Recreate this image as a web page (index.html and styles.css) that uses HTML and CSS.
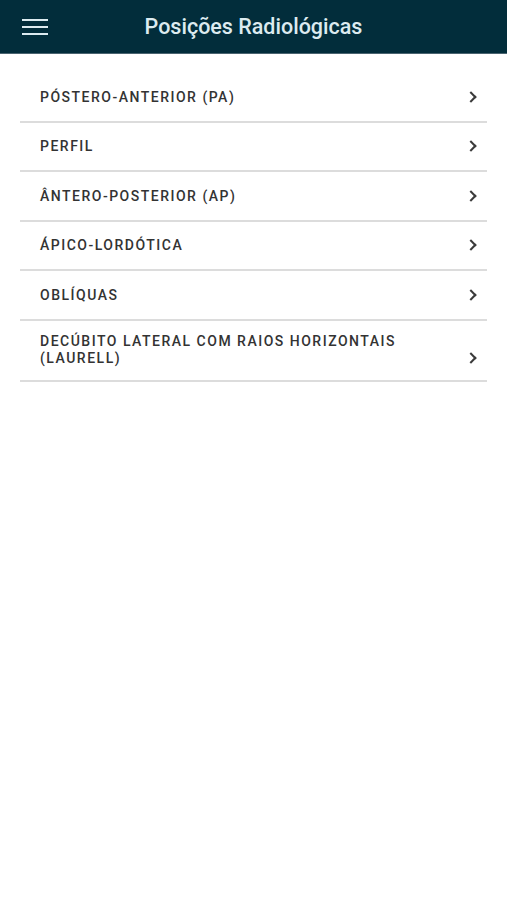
FILE: index.html
```html
<!DOCTYPE html>
<html lang="pt">
<head>
  <meta charset="UTF-8">
  <meta name="viewport" content="width=device-width, initial-scale=1.0">
  <title>Posições Radiológicas</title>
  <link rel="stylesheet" href="styles.css">
</head>
<body>
  <div class="toolbar">
    <button class="menu-btn" aria-label="Menu">
      <svg width="26" height="16" viewBox="0 0 26 16"><path d="M0 1h26M0 8h26M0 15h26" stroke="#dcebf0" stroke-width="2"/></svg>
    </button>
    <h1 class="title">Posições Radiológicas</h1>
  </div>

  <ul class="list">
    <li class="item"><span class="label">Póstero-anterior (PA)</span><span class="chev"></span></li>
    <li class="item"><span class="label">Perfil</span><span class="chev"></span></li>
    <li class="item"><span class="label">Ântero-posterior (AP)</span><span class="chev"></span></li>
    <li class="item"><span class="label">Ápico-lordótica</span><span class="chev"></span></li>
    <li class="item"><span class="label">Oblíquas</span><span class="chev"></span></li>
    <li class="item tall"><span class="label">Decúbito lateral com raios horizontais (Laurell)</span><span class="chev"></span></li>
  </ul>
</body>
</html>
```

FILE: styles.css
```css
body {
  margin: 0;
  font-family: Roboto, "Noto Sans", sans-serif;
  background: #fff;
}
.toolbar {
  height: 54px;
  background: #022d3b;
  display: flex;
  align-items: center;
  justify-content: center;
  position: relative;
  border-bottom: 1px solid #4a6470;
  box-sizing: border-box;
}
.menu-btn {
  position: absolute;
  left: 22px;
  top: 19px;
  background: none;
  border: none;
  padding: 0;
  line-height: 0;
}
.title {
  margin: 0;
  font-size: 21.5px;
  font-weight: 500;
  color: #dcebf0;
}
.list {
  list-style: none;
  margin: 19px 20px 0;
  padding: 0;
}
.item {
  display: flex;
  align-items: center;
  justify-content: space-between;
  height: 47.5px;
  padding: 0 12px 0 20px;
  border-bottom: 2px solid #dcdcdc;
  color: #333;
  font-size: 14px;
  font-weight: 500;
  letter-spacing: 1.5px;
  text-transform: uppercase;
}
.item.tall {
  height: 61px;
  align-items: flex-end;
  padding-bottom: 13px;
  box-sizing: border-box;
  line-height: 17px;
}
.item.tall .label {
  max-width: 380px;
}
.chev {
  width: 6px;
  height: 6px;
  border-top: 2px solid #3a3a3a;
  border-right: 2px solid #3a3a3a;
  transform: rotate(45deg);
  flex: none;
}
.item.tall .chev {
  margin-bottom: 5px;
}
```
